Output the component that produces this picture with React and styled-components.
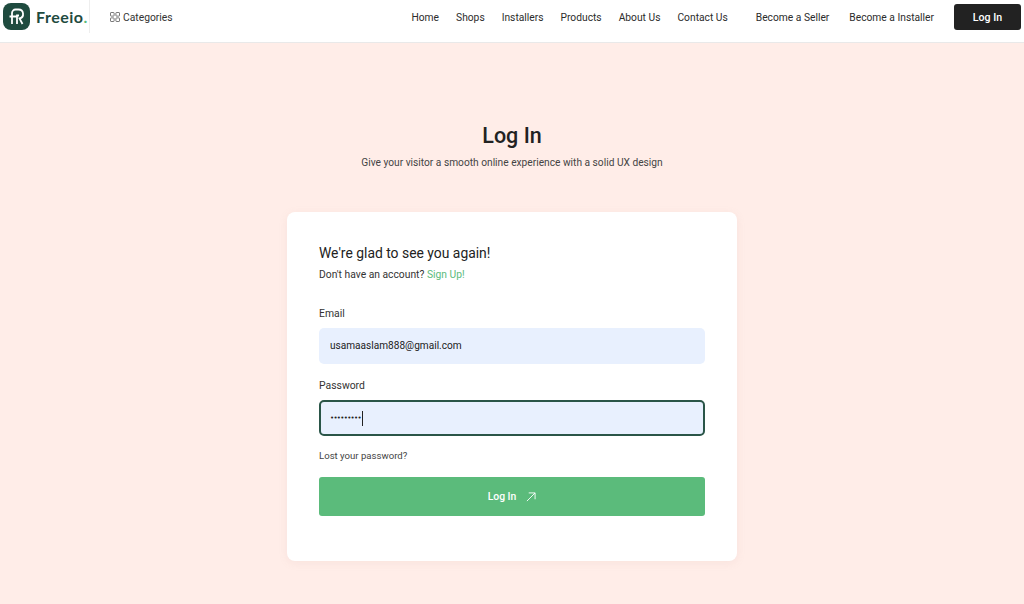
import React from "react";
import styled, { createGlobalStyle } from "styled-components";

const Global = createGlobalStyle`
  html, body { margin: 0; padding: 0; background: #ffede8; }
  body { font-family: "Roboto", "Liberation Sans", sans-serif; color: #222; }
  * { box-sizing: border-box; }
`;
const Page = styled.div`
  width: 1024px; height: 604px; overflow: hidden; display: flex; flex-direction: column;
`;
const Header = styled.header`
  height: 43px; flex: none; background: #fff; border-bottom: 1px solid #e9e9e9;
  display: flex; align-items: stretch; padding: 0 3px 0 3px;
`;
const Brand = styled.div`
  display: flex; align-items: center; gap: 6px; width: 87px; border-right: 1px solid #eeeeee; height: 33px;
  padding-bottom: 1px;
`;
const BrandName = styled.span`
  font-family: "Lato", sans-serif; font-size: 16px; font-weight: 700; color: #1f4b3f; letter-spacing: 0.5px;
  & > i { color: #5bbb7b; font-style: normal; }
`;
const Categories = styled.div`
  display: flex; align-items: center; gap: 3px; margin-left: 20px; height: 34px;
  font-size: 10.3px; font-weight: 400; color: #333;
`;
const Nav = styled.nav`
  margin-left: auto; display: flex; align-items: center; gap: 17px; height: 34px;
`;
const NavLink = styled.a`
  font-size: 10.25px; font-weight: 400; color: #2c2c2c; white-space: nowrap;
  margin-left: ${p => p.$gap || 0}px;
`;
const HeaderButton = styled.button`
  width: 67px; height: 26px; margin-left: 3px; border: 0; border-radius: 3px; background: #222;
  color: #fff; font: 500 10.6px "Roboto", sans-serif;
`;
const Main = styled.main`
  flex: 1; display: flex; flex-direction: column; align-items: center; padding-top: 79px;
`;
const Title = styled.h1`
  margin: 0; font-size: 21.5px; line-height: 28px; font-weight: 500; color: #222;
`;
const Subtitle = styled.p`
  margin: 5px 0 0; font-size: 10.2px; line-height: 16px; color: #444;
`;
const Card = styled.section`
  width: 450px; height: 349px; margin-top: 41px; background: #fff; border-radius: 8px;
  padding: 32px; box-shadow: 0 2px 8px rgba(200, 160, 150, 0.12); display: flex; flex-direction: column;
`;
const CardTitle = styled.h2`
  margin: 0; font-size: 13.9px; line-height: 18px; font-weight: 400; color: #222;
`;
const Note = styled.p`
  margin: 5px 0 0; font-size: 10.3px; line-height: 16px; color: #333;
  & > a { color: #5bbb7b; }
`;
const Label = styled.label`
  display: block; margin-top: ${p => p.$top}px; font-size: 10.4px; line-height: 16px; font-weight: 400; color: #333;
`;
const Field = styled.div`
  width: 386px; height: 36px; margin-top: 6px; background: #e8f0fe; border-radius: 5px;
  display: flex; align-items: center; padding: 0 0 1px 11px; font-size: 10.1px; color: #222;
  border: ${p => (p.$focus ? "2px solid #2a5548" : "0")};
  ${p => p.$focus && "padding: 0 0 0 9px;"}
`;
const Dots = styled.span`
  font-size: 7px; letter-spacing: -0.7px; font-family: "DejaVu Sans", sans-serif;
`;
const Caret = styled.span`
  width: 1px; height: 15px; background: #222; margin-left: 1px;
`;
const Lost = styled.a`
  margin-top: 12px; font-size: 9.6px; line-height: 16px; color: #444;
`;
const Submit = styled.button`
  width: 386px; height: 39px; margin-top: 13px; border: 0; border-radius: 3px; background: #5bbb7b;
  color: #fff; font: 500 10.4px "Roboto", sans-serif; display: flex; align-items: center; justify-content: center; gap: 10px;
`;

export default function App() {
  return (
    <Page>
      <Global />
      <Header>
        <Brand>
          <svg width="27" height="27" viewBox="0 0 27 27">
            <rect x="0" y="0" width="27" height="27" rx="8" fill="#1f4b3f" />
            <path d="M9 21V10a3.5 3.5 0 0 1 3.5-3.5h3a4.5 4.5 0 0 1 1 8.9l3 5.6M14 21V12.5h2M6.5 13.5H14" fill="none" stroke="#fff" strokeWidth="1.8" />
          </svg>
          <BrandName>Freeio<i>.</i></BrandName>
        </Brand>
        <Categories>
          <svg width="10" height="10" viewBox="0 0 10 10" fill="none" stroke="#555" strokeWidth="0.8">
            <rect x="0.5" y="0.5" width="3.6" height="3.6" rx="0.6" />
            <rect x="5.9" y="0.5" width="3.6" height="3.6" rx="0.6" />
            <rect x="0.5" y="5.9" width="3.6" height="3.6" rx="0.6" />
            <rect x="5.9" y="5.9" width="3.6" height="3.6" rx="0.6" />
          </svg>
          Categories
        </Categories>
        <Nav>
          <NavLink>Home</NavLink>
          <NavLink>Shops</NavLink>
          <NavLink>Installers</NavLink>
          <NavLink>Products</NavLink>
          <NavLink>About Us</NavLink>
          <NavLink>Contact Us</NavLink>
          <NavLink $gap={11}>Become a Seller</NavLink>
          <NavLink $gap={3}>Become a Installer</NavLink>
          <HeaderButton>Log In</HeaderButton>
        </Nav>
      </Header>
      <Main>
        <Title>Log In</Title>
        <Subtitle>Give your visitor a smooth online experience with a solid UX design</Subtitle>
        <Card>
          <CardTitle>We're glad to see you again!</CardTitle>
          <Note>Don't have an account? <a>Sign Up!</a></Note>
          <Label $top={23}>Email</Label>
          <Field>usamaaslam888@gmail.com</Field>
          <Label $top={14}>Password</Label>
          <Field $focus><Dots>•••••••••</Dots><Caret /></Field>
          <Lost>Lost your password?</Lost>
          <Submit>
            Log In
            <svg width="10" height="10" viewBox="0 0 11 11" fill="none" stroke="#fff" strokeWidth="1">
              <path d="M1 10L10 1M3 1h7v7" />
            </svg>
          </Submit>
        </Card>
      </Main>
    </Page>
  );
}
